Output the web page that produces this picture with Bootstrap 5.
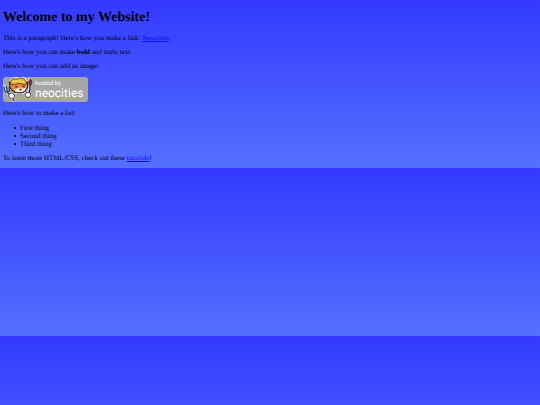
<!DOCTYPE html>
<html lang="en">
<head>
<meta charset="utf-8">
<meta name="viewport" content="width=device-width, initial-scale=1">
<title>My Website</title>
<link rel="stylesheet" href="https://cdn.jsdelivr.net/npm/bootstrap@5.3.0/dist/css/bootstrap.min.css">
<style>
body {
  padding: 10px 3px 6px;
  font: 7px/8px "Liberation Serif", "Times New Roman", serif;
  text-rendering: geometricPrecision;
  color: #000;
  background: linear-gradient(#333aff, #5570ff);
}
h1 { font-size: 14px; line-height: 16px; margin-bottom: 8px; }
p { margin-bottom: 6px; }
a, a:hover { color: #1208ee; }
.list-things { padding-left: 11px; margin: 7px 0 6px; }
.list-things li::before {
  content: "";
  width: 2px;
  height: 2px;
  margin-right: 4px;
  border-radius: 50%;
  background: #000;
}
.host-badge { margin: 7px 0; }
.host-badge svg { width: 85px; }
</style>
<script src="https://cdn.jsdelivr.net/npm/bootstrap@5.3.0/dist/js/bootstrap.bundle.min.js" defer></script>
</head>
<body>
<main>
  <h1 class="fw-bold">Welcome to my Website!</h1>
  <p>This is a paragraph! Here's how you make a link: <a href="https://neocities.org">Neocities</a>.</p>
  <p>Here's how you can make <strong>bold</strong> and <em>italic</em> text.</p>
  <p>Here's how you can add an image:</p>
  <div class="host-badge">
    <svg class="d-block" width="85" height="25" viewBox="0 0 85 25" role="img" aria-label="Hosted by Neocities">
      <rect width="85" height="25" rx="3" fill="#a6a6a9"/>
      <g stroke="#e6e9f5" stroke-width="1.8" stroke-linejoin="round" stroke-linecap="round" fill="#e6e9f5">
        <path d="M7 5 10 1.5 14 1 20 1 24 4 25 11 20 16 12 16 6.5 11Z"/>
        <path d="M1.5 9 4 15 11.5 24M27.5 2 26.5 14 25 17" fill="none" stroke-width="2.4"/>
        <circle cx="8.6" cy="19" r="2.8"/><circle cx="25" cy="18" r="2.6"/>
      </g>
      <path d="M1 9.5 1.8 14 4 15.5 6.5 14 6 9.5M3.2 9 4.4 15 11.8 24.4" fill="none" stroke="#344a70" stroke-width="1.4"/>
      <path d="M6.4 5 7 10.5 9 13.5 12 15.5 18 16 22 14.2 24.6 10.5 24.8 5Z" fill="#ea8738" stroke="#2c2029" stroke-width="1.2" stroke-linejoin="round"/>
      <path d="M11 12.4 14.5 11.4 17.5 10.4 20 11.4 23 10.8 21.8 13.4 18.5 15 13.5 14.8Z" fill="#fff0dc"/>
      <path d="M8 7.4 7.4 4.5 10 1.8 14 2.2 16 0.8 20.5 1.6 23.6 5 22.8 7.8 16 6.4 11 7.6Z" fill="#e6b73a" stroke="#5c4022" stroke-width="0.9"/>
      <path d="M10 4.6 14.5 3.7 21.5 4.9" stroke="#ffdc68" stroke-width="0.9" fill="none"/>
      <path d="M12.2 9.8 14.5 9.6M19.6 9.4 21.6 9.7M16.4 12.4H18.6M17.5 12V13.6" stroke="#2c2029" stroke-width="1.3" fill="none"/>
      <path d="M27.2 8 26.4 16" stroke="#35303d" stroke-width="1.5"/>
      <path d="M27.7 1.5 26 4.6 26.4 8 28.2 8 28.8 4.5Z" fill="#8b2942" stroke="#3a2635" stroke-width="0.7"/>
      <circle cx="8.6" cy="19" r="3" fill="#fff8ec" stroke="#30313f" stroke-width="0.9"/>
      <circle cx="25" cy="18" r="2.8" fill="#fff8ec" stroke="#30313f" stroke-width="0.9"/>
      <path d="M7.4 20.7H9.8M24.2 19.5H26" stroke="#e8a75e" stroke-width="0.8"/>
      <g fill="#fff" font-family="Roboto, 'Open Sans', sans-serif">
        <text x="32" y="8" font-size="6">hosted by</text>
        <text x="32" y="20" font-size="12">neocities</text>
      </g>
    </svg>
  </div>
  <p>Here's how to make a list:</p>
  <ul class="list-things list-unstyled">
    <li class="d-flex align-items-center">First thing</li>
    <li class="d-flex align-items-center">Second thing</li>
    <li class="d-flex align-items-center">Third thing</li>
  </ul>
  <p class="mb-0">To learn more HTML/CSS, check out these <a href="https://neocities.org/tutorials">tutorials</a>!</p>
</main>
</body>
</html>
